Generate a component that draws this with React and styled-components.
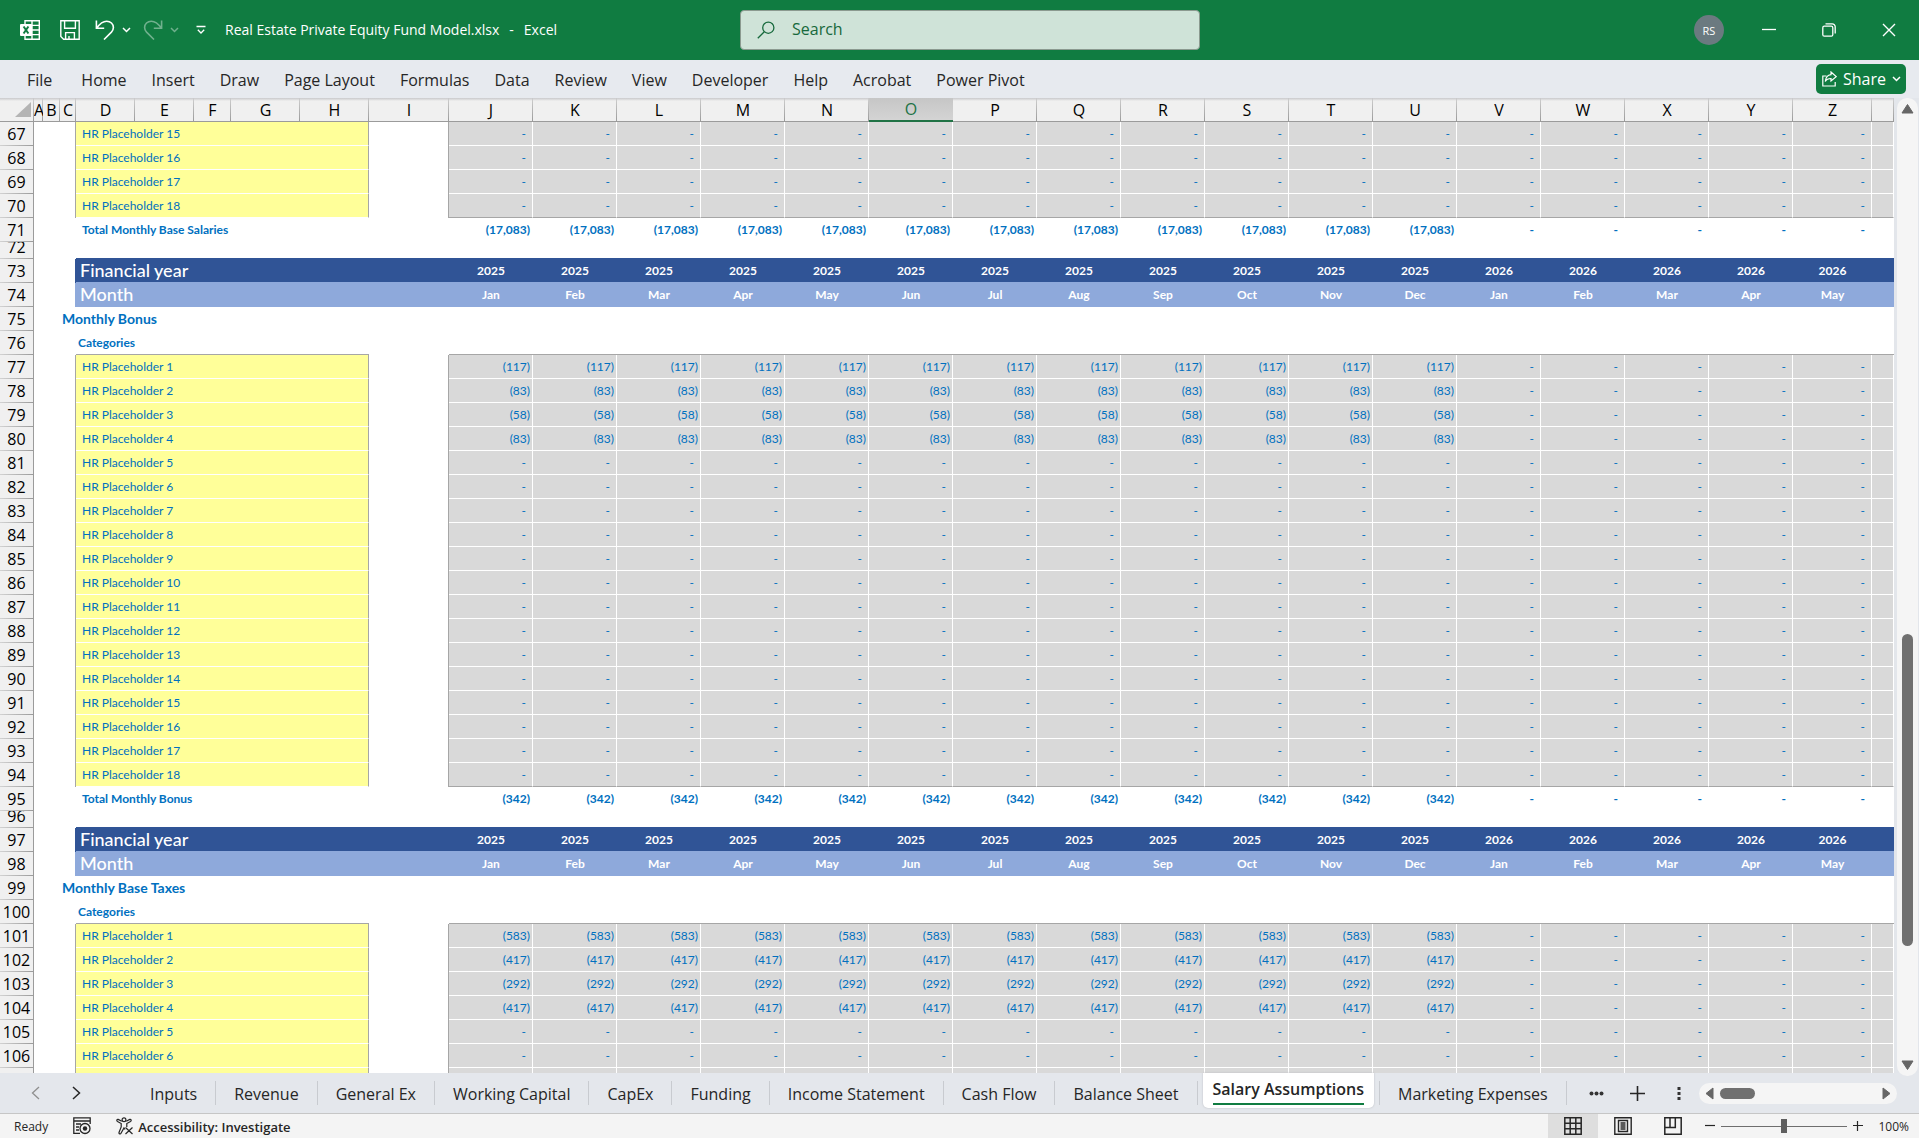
import React from "react";
import styled, { createGlobalStyle, css } from "styled-components";

const uiFont = '"Open Sans", "Noto Sans", sans-serif';
const cellFont = 'Lato, "Open Sans", sans-serif';
const color = {
  green: "#107c41",
  chrome: "#e7eaef",
  ink: "#262626",
  line: "#9b9b9b",
  cellLine: "#a6a6a6",
  link: "#0070c0",
  input: "#ffff99",
  calc: "#d9d9d9",
  year: "#305496",
  month: "#8ea9db",
};

const GlobalStyle = createGlobalStyle`
  *, *::before, *::after { box-sizing: border-box; }
  body { margin: 0; font-family: ${uiFont}; color: ${color.ink}; overflow: hidden; }
  button, input { font: inherit; color: inherit; }
  button { padding: 0; border: 0; background: none; cursor: pointer; white-space: nowrap; }
  svg { display: block; flex: none; }
`;

const Window = styled.div`
  display: flex;
  flex-direction: column;
  height: 100vh;
`;

/* ---------- title bar ---------- */

const TitleBar = styled.header`
  display: grid;
  grid-template-columns: 740px minmax(200px, 460px) 1fr;
  align-items: center;
  flex: none;
  height: 60px;
  background: ${color.green};
  color: #fff;
`;

const QuickAccess = styled.div`
  display: flex;
  align-items: center;
  padding-left: 20px;
`;

const QuickButton = styled.button`
  display: flex;
  margin-right: ${(p) => p.$gap || 0}px;
  opacity: ${(p) => (p.disabled ? 0.4 : 1)};
`;

const DocumentName = styled.div`
  display: flex;
  gap: 10px;
  font-size: 14px;
  line-height: 20px;
  white-space: nowrap;
`;

const SearchBox = styled.label`
  display: flex;
  align-items: center;
  gap: 17px;
  height: 40px;
  padding-left: 16px;
  border: 1px solid #8b9a90;
  border-radius: 4px;
  background: #cfe3d8;
  color: #17693c;
`;

const SearchInput = styled.input`
  flex: 1;
  min-width: 0;
  border: 0;
  outline: 0;
  background: transparent;
  font-size: 16px;
  line-height: 24px;
  padding: 0 0 2px;
  &::placeholder { color: #17693c; opacity: 1; }
`;

const WindowControls = styled.div`
  display: flex;
  justify-content: flex-end;
`;

const WindowButton = styled.button`
  display: grid;
  place-items: center;
  width: 60px;
  height: 60px;
`;

const Avatar = styled.span`
  display: grid;
  place-items: center;
  width: 30px;
  height: 30px;
  border-radius: 50%;
  background: #6b7a80;
  font-size: 11px;
`;

/* ---------- ribbon tabs ---------- */

const Ribbon = styled.nav`
  display: flex;
  align-items: center;
  flex: none;
  height: 38px;
  padding: 0 13px 0 15px;
  background: ${color.chrome};
`;

const RibbonTab = styled.button`
  padding: 2px 13px 0 12px;
  font-size: 16px;
  line-height: 24px;
  &:first-child { margin-right: 4px; }
`;

const ShareButton = styled.button`
  display: flex;
  align-items: center;
  gap: 6px;
  height: 30px;
  margin-left: auto;
  padding: 0 5px 0 6px;
  border-radius: 5px;
  background: ${color.green};
  color: #fff;
  font-size: 16px;
`;

/* ---------- grid ---------- */

const Workspace = styled.main`
  display: flex;
  flex: 1;
  min-height: 0;
`;

const SheetView = styled.div`
  flex: 1;
  min-width: 0;
  overflow: hidden;
  background: #fff;
`;

const Sheet = styled.table`
  width: 100%;
  table-layout: fixed;
  border-collapse: separate;
  border-spacing: 0;
  font: 12px/23px ${cellFont};
  color: ${color.link};
  th, td { padding: 0; }
`;

const Col = styled.col`
  width: ${(p) => (p.$width ? `${p.$width}px` : "auto")};
`;

const ColumnHead = styled.th`
  height: 24px;
  overflow: hidden;
  border-bottom: 1px solid ${color.line};
  background:
    linear-gradient(#c9c9cb, transparent) top / 100% 3px no-repeat,
    linear-gradient(#cfcfcf, ${color.line}) right / 1px 100% no-repeat,
    #f0f0f0;
  color: #000;
  font: 400 16px/22px ${uiFont};
  ${(p) =>
    p.$selected &&
    css`
      border-bottom: 2px solid #217346;
      background: linear-gradient(#c6c6c6, #d4d4d4);
      color: #217346;
    `}
`;

const SelectAll = styled.button`
  display: flex;
  justify-content: flex-end;
  width: 100%;
  padding-right: 3px;
`;

const RowHead = styled.th`
  border-right: 1px solid ${color.line};
  background:
    linear-gradient(90deg, #d2d2d2, ${color.line}) bottom / 100% 1px no-repeat,
    #f0f0f0;
  color: #000;
  font: 400 16px/23px ${uiFont};
`;

const RowNumber = styled.div`
  display: flex;
  align-items: flex-end;
  justify-content: center;
  height: ${(p) => (p.$short ? 17 : 24)}px;
  overflow: hidden;
`;

const Blank = styled.td`
  border-right: ${(p) => (p.$edge ? `1px solid ${p.$edge}` : 0)};
  border-bottom: ${(p) => (p.$base ? `1px solid ${p.$base}` : 0)};
`;

const InputCell = styled.td`
  border-right: 1px solid ${color.cellLine};
  border-bottom: 1px solid #fff;
  background: ${color.input};
`;

const CellText = styled.span`
  padding-left: 6px;
`;

const NumberCell = styled.td`
  border-right: 1px solid #fff;
  border-bottom: 1px solid ${(p) => (p.$last ? color.cellLine : "#fff")};
  background: ${(p) => (p.$plain ? "#fff" : color.calc)};
  font-weight: ${(p) => (p.$plain ? 700 : 400)};
  text-align: right;
`;

const Figure = styled.span`
  padding-right: ${(p) => (p.$dash ? 6 : 2)}px;
`;

const TotalLabel = styled.td`
  border-bottom: 1px solid #fff;
  font-weight: 700;
`;

const SectionTitle = styled.td`
  font-size: 14px;
  font-weight: 700;
  border-bottom: 1px solid #fff;
`;

const Indent = styled.span`
  padding-left: 2px;
`;

const GroupLabel = styled.td`
  border-bottom: 1px solid ${color.cellLine};
  font-weight: 700;
`;

const BandCell = styled.td`
  border-bottom: 1px solid ${color.month};
  background: ${(p) => (p.$month ? color.month : color.year)};
  color: #fff;
  font-weight: 700;
  text-align: center;
`;

const BandLabel = styled(BandCell)`
  font-size: 18px;
  font-weight: 500;
  text-align: left;
`;

const BandText = styled.span`
  padding-left: 4px;
`;

/* ---------- scroll bars ---------- */

const ScrollColumn = styled.div`
  display: flex;
  flex: none;
  width: 25px;
  padding: 0 1px 0 3px;
  background: #e3e6eb;
`;

const ScrollTrack = styled.div`
  display: flex;
  flex-direction: column;
  align-items: center;
  flex: 1;
  z-index: 1;
  margin-bottom: -3px;
  padding: 5px 0;
  border-radius: 10px;
  background: #f5f5f5;
`;

const ScrollSpace = styled.div`
  flex: ${(p) => p.$share} 0 0;
`;

const ScrollThumb = styled.div`
  flex: ${(p) => p.$share} 0 0;
  width: 11px;
  border-radius: 6px;
  background: #707070;
`;

const HorizontalTrack = styled.div`
  display: flex;
  align-items: center;
  width: 198px;
  height: 21px;
  padding: 0 6px;
  border-radius: 11px;
  background: #f5f5f5;
`;

const HorizontalThumb = styled.div`
  width: 35px;
  height: 11px;
  margin: 0 auto 0 6px;
  border-radius: 6px;
  background: #707070;
`;

/* ---------- sheet tabs ---------- */

const SheetTabs = styled.nav`
  display: flex;
  align-items: center;
  flex: none;
  height: 41px;
  padding-right: 22px;
  border-bottom: 1px solid #c6c6c6;
  background: #e4e7ec;
`;

const TabArrows = styled.div`
  display: flex;
  gap: 32px;
  width: 132px;
  padding-left: 31px;
  flex: none;
`;

const TabSlot = styled.div`
  display: flex;
  align-items: center;
  height: 24px;
  border-right: 1px solid #c8cbd0;
`;

const SheetTab = styled.button`
  padding: 1px 18px 0;
  font-size: 16px;
  line-height: 24px;
`;

const ActiveSlot = styled.div`
  align-self: flex-start;
  height: 35px;
  margin: 0 5px;
  padding: 0 10px;
  border-radius: 0 0 5px 5px;
  background: #fff;
  box-shadow: 0 0 2px #b5b8bd;
`;

const ActiveTab = styled.button`
  height: 32px;
  padding-top: 2px;
  border-bottom: 2px solid ${color.green};
  font-size: 16px;
  font-weight: 600;
  line-height: 26px;
`;

const TabTools = styled.div`
  display: flex;
  align-items: center;
  gap: 26px;
  padding-left: 22px;
`;

const ScrollTools = styled.div`
  display: flex;
  align-items: center;
  gap: 18px;
  margin-left: auto;
`;

/* ---------- status bar ---------- */

const StatusBar = styled.footer`
  display: flex;
  align-items: center;
  flex: none;
  height: 24px;
  background: #f4f4f4;
  font-size: 12px;
  line-height: 20px;
`;

const StatusText = styled.span`
  padding-top: 2px;
`;

const StatusInfo = styled.div`
  display: flex;
  align-items: center;
  gap: 25px;
  padding-left: 14px;
`;

const Accessibility = styled.button`
  display: flex;
  align-items: center;
  gap: 4px;
  font-size: 13px;
  font-weight: 600;
`;

const StatusTools = styled.div`
  display: flex;
  align-items: center;
  margin-left: auto;
  padding-right: 10px;
`;

const ViewButton = styled.button`
  display: grid;
  place-items: center;
  width: 50px;
  height: 24px;
  background: ${(p) => (p.$on ? "#dedede" : "transparent")};
`;

const Zoom = styled.div`
  display: flex;
  align-items: center;
  gap: 6px;
  padding: 0 15px 0 7px;
`;

const ZoomSlider = styled.input`
  width: 126px;
  height: 14px;
  margin: 0;
  appearance: none;
  background: linear-gradient(#6e6e6e, #6e6e6e) center / 100% 1px no-repeat;
  &::-webkit-slider-thumb {
    appearance: none;
    width: 6px;
    height: 14px;
    background: #5f5f5f;
  }
`;

/* ---------- icons ---------- */

const Icon = ({ w = 20, h = w, sw = 1.4, children }) => (
  <svg width={w} height={h} viewBox={`0 0 ${w} ${h}`} fill="none" stroke="currentColor" strokeWidth={sw} aria-hidden="true">
    {children}
  </svg>
);

const ExcelIcon = () => (
  <Icon>
    <path d="M5 4V.8h14.3v18.4H5V16M5 5.4h14M5 10h14M5 14.6h14M12 .8v18.4" />
    <rect x="0" y="4" width="12" height="12" rx="1" fill="#fff" stroke="none" />
    <path d="M3.6 6.5l4.8 7M8.4 6.5l-4.8 7" stroke={color.green} strokeWidth="2" />
  </Icon>
);
const SaveIcon = () => (
  <Icon>
    <path d="M.8.8h18.4v18.4H3.6L.8 16.4zM4.6.8v7.4h10.8V.8M5.6 19v-6.4h8.8V19M9 16v3" />
  </Icon>
);
const UndoIcon = () => (
  <Icon w={20} sw={1.6}>
    <path d="M1.4.5v7.8h7.8M1.8 8C4 4.8 7.4 1.2 11.7 1.2c3.8 0 6.700 2.800 6.700 6.300 0 1.900-.8 3.300-2 4.600L9 19.500" />
  </Icon>
);
const RedoIcon = () => (
  <Icon w={20} sw={1.6}>
    <path d="M18.600.5v7.800h-7.800M18.200 8C16 4.800 12.600 1.200 8.300 1.200 4.500 1.200 1.600 4 1.600 7.500c0 1.900.8 3.300 2 4.600L11 19.500" />
  </Icon>
);
const ChevronIcon = () => (
  <Icon w={9} h={6} sw={1.5}>
    <path d="M1 1l3.500 3.500L8 1" />
  </Icon>
);
const CustomizeIcon = () => (
  <Icon w={10} h={10} sw={1.3}>
    <path d="M.5 1.500h9M1.800 4.800L5 8l3.200-3.200" />
  </Icon>
);
const SearchIcon = () => (
  <Icon w={18} sw={1.3}>
    <circle cx="11.300" cy="6.700" r="5.600" />
    <path d="M7.300 10.700L.8 17.200" />
  </Icon>
);
const MinimizeIcon = () => (
  <Icon w={14} sw={1.3}>
    <path d="M0 6.500h14" />
  </Icon>
);
const RestoreIcon = () => (
  <Icon w={14} sw={1.3}>
    <rect x=".8" y="3.200" width="10" height="10" rx="1.500" />
    <path d="M3.500.8h6.700a3 3 0 0 1 3 3v6.700" />
  </Icon>
);
const CloseIcon = () => (
  <Icon w={14} sw={1.4}>
    <path d="M1 1l12 12M13 1L1 13" />
  </Icon>
);
const ShareIcon = () => (
  <Icon w={15} h={16} sw={1.2}>
    <path d="M4.500 5H.8v10h12.400v-4" />
    <path d="M9 1l5.200 4.600L9 10V7.500c-2.800 0-4.500.8-5.700 3C3.600 6.800 5.500 4 9 3.600z" />
  </Icon>
);
const Corner = () => (
  <svg width="16" height="15" viewBox="0 0 16 15" aria-hidden="true">
    <path d="M16 0v15H0z" fill="#b4b4b4" />
  </svg>
);
const Arrow = ({ d, w, h }) => (
  <svg width={w} height={h} viewBox={`0 0 ${w} ${h}`} aria-hidden="true">
    <path d={d} fill="#666" stroke="#666" strokeLinejoin="round" />
  </svg>
);
const PrevIcon = () => (
  <Icon w={9} h={14} sw={1.3}>
    <path d="M8 1L1.500 7 8 13" stroke="#8f8f8f" />
  </Icon>
);
const NextIcon = () => (
  <Icon w={9} h={14} sw={1.5}>
    <path d="M1 1l6.500 6L1 13" />
  </Icon>
);
const MoreIcon = () => (
  <svg width="15" height="5" viewBox="0 0 15 5" fill="#333" aria-hidden="true">
    <circle cx="2.500" cy="2.500" r="2" />
    <circle cx="7.500" cy="2.500" r="2" />
    <circle cx="12.500" cy="2.500" r="2" />
  </svg>
);
const KebabIcon = () => (
  <svg width="4" height="14" viewBox="0 0 4 14" fill="#333" aria-hidden="true">
    <path d="M.5 1h3v3h-3zM.5 6h3v3h-3zM.5 11h3v3h-3z" />
  </svg>
);
const AddIcon = () => (
  <Icon w={15} sw={1.6}>
    <path d="M7.500 0v15M0 7.500h15" />
  </Icon>
);
const MacroIcon = () => (
  <Icon w={18} sw={1.3}>
    <path d="M7 16.300H.8V.8h16.400V7M.8 4h16.400M3 7h5M3 10h3M3 13h3" />
    <circle cx="12" cy="11.500" r="5" />
    <circle cx="12" cy="11.500" r="2.200" fill="currentColor" stroke="none" />
  </Icon>
);
const PersonIcon = () => (
  <Icon w={18} sw={1.2}>
    <circle cx="8" cy="2.700" r="1.900" />
    <path d="M5.800 4.300L2.200 2.400C.9 2 .3 3.800 1.500 4.500l3.700 2v3.500L3 15.500c-.3 1.500 1.500 2 2 .8L8 11l1 1.500M10.200 4.300l3.600-1.900c1.300-.4 1.900 1.400.7 2.100l-3.700 2V10M9.500 10.500l7 6.500M16.500 10.500l-7 6.500" />
  </Icon>
);
const NormalViewIcon = () => (
  <Icon w={18} sw={1.5}>
    <path d="M.8.8h16.400v16.400H.8zM6.200.8v16.400M11.800.8v16.400M.8 6.200h16.400M.8 11.800h16.400" />
  </Icon>
);
const PageViewIcon = () => (
  <Icon w={18} sw={1.4}>
    <path d="M.8.8h16.400v16.400H.8zM4.500 3.500h9v11h-9zM6.500 6h5M6.500 8h5M6.500 10h5M6.500 12h5" />
  </Icon>
);
const BreakViewIcon = () => (
  <Icon w={18} sw={1.5}>
    <path d="M.8.8h16.400v16.400H.8zM.8 10.500h10.500V.8M6 .8v9.700" />
  </Icon>
);
const MinusIcon = () => (
  <Icon w={10} sw={1.2}>
    <path d="M0 4.500h10" />
  </Icon>
);
const PlusIcon = () => (
  <Icon w={10} sw={1.2}>
    <path d="M0 4.500h10M4.500 0v10" />
  </Icon>
);

/* ---------- data ---------- */

const columns = [
  ["A", 9], ["B", 17], ["C", 16], ["D", 59], ["E", 59], ["F", 37], ["G", 69], ["H", 69], ["I", 80],
  ..."JKLMNOPQRSTUVWXY".split("").map((c) => [c, 84]),
  ["Z", 79], ["", null],
];
const months = ["Jan", "Feb", "Mar", "Apr", "May", "Jun", "Jul", "Aug", "Sep", "Oct", "Nov", "Dec", "Jan", "Feb", "Mar", "Apr", "May"];
const years = months.map((_, i) => (i < 12 ? "2025" : "2026"));

const placeholders = (from, to, amounts = []) =>
  Array.from({ length: to - from + 1 }, (_, i) => ({
    type: "item",
    label: `HR Placeholder ${from + i}`,
    amount: amounts[i],
    last: from + i === 18,
  }));

const heading = (title) => [{ type: "gap" }, { type: "year" }, { type: "month" }, { type: "title", label: title }, { type: "group" }];

const rows = [
  ...placeholders(15, 18),
  { type: "total", label: "Total Monthly Base Salaries", amount: "(17,083)" },
  ...heading("Monthly Bonus"),
  ...placeholders(1, 18, ["(117)", "(83)", "(58)", "(83)"]),
  { type: "total", label: "Total Monthly Bonus", amount: "(342)" },
  ...heading("Monthly Base Taxes"),
  ...placeholders(1, 7, ["(583)", "(417)", "(292)", "(417)"]),
];

const ribbonTabs = ["File", "Home", "Insert", "Draw", "Page Layout", "Formulas", "Data", "Review", "View", "Developer", "Help", "Acrobat", "Power Pivot"];
const tabsBefore = ["Inputs", "Revenue", "General Ex", "Working Capital", "CapEx", "Funding", "Income Statement", "Cash Flow", "Balance Sheet"];

/* ---------- rows ---------- */

const figures = (row, plain) =>
  months.map((_, i) => {
    const value = row.amount && i < 12 ? row.amount : "-";
    return (
      <NumberCell key={i} $plain={plain} $last={row.last}>
        <Figure $dash={value === "-"}>{value}</Figure>
      </NumberCell>
    );
  });

function RowCells({ row }) {
  switch (row.type) {
    case "item":
      return (
        <>
          <Blank colSpan={2} />
          <Blank $edge={color.cellLine} />
          <InputCell colSpan={5}><CellText>{row.label}</CellText></InputCell>
          <Blank $edge={color.cellLine} />
          {figures(row, false)}
          <NumberCell $last={row.last} />
        </>
      );
    case "total":
      return (
        <>
          <Blank colSpan={3} />
          <TotalLabel colSpan={6}><CellText>{row.label}</CellText></TotalLabel>
          {figures(row, true)}
          <Blank />
        </>
      );
    case "year":
    case "month": {
      const isMonth = row.type === "month";
      return (
        <>
          <Blank colSpan={2} />
          <Blank $edge={isMonth ? color.month : color.year} />
          <BandLabel $month={isMonth} colSpan={6}><BandText>{isMonth ? "Month" : "Financial year"}</BandText></BandLabel>
          {(isMonth ? months : years).map((text, i) => (
            <BandCell key={i} $month={isMonth}>{text}</BandCell>
          ))}
          <BandCell $month={isMonth} />
        </>
      );
    }
    case "title":
      return (
        <>
          <Blank colSpan={2} />
          <SectionTitle colSpan={7}><Indent>{row.label}</Indent></SectionTitle>
          <Blank colSpan={18} />
        </>
      );
    case "group":
      return (
        <>
          <Blank colSpan={3} />
          <GroupLabel colSpan={5}><Indent>Categories</Indent></GroupLabel>
          <Blank />
          <Blank colSpan={18} $base={color.cellLine} />
        </>
      );
    default:
      return (
        <>
          <Blank colSpan={3} />
          <Blank colSpan={24} $base={color.year} />
        </>
      );
  }
}

export default function App() {
  return (
    <Window>
      <GlobalStyle />
      <TitleBar>
        <QuickAccess>
          <QuickButton $gap={20} aria-label="Excel"><ExcelIcon /></QuickButton>
          <QuickButton $gap={15} aria-label="Save"><SaveIcon /></QuickButton>
          <QuickButton $gap={7} aria-label="Undo"><UndoIcon /></QuickButton>
          <QuickButton $gap={12} aria-label="Undo history"><ChevronIcon /></QuickButton>
          <QuickButton $gap={7} disabled aria-label="Redo"><RedoIcon /></QuickButton>
          <QuickButton $gap={17} disabled aria-label="Redo history"><ChevronIcon /></QuickButton>
          <QuickButton $gap={19} aria-label="Customize toolbar"><CustomizeIcon /></QuickButton>
          <DocumentName>
            <span>Real Estate Private Equity Fund Model.xlsx</span>
            <span>-</span>
            <span>Excel</span>
          </DocumentName>
        </QuickAccess>
        <SearchBox>
          <SearchIcon />
          <SearchInput type="text" placeholder="Search" aria-label="Search" />
        </SearchBox>
        <WindowControls>
          <WindowButton aria-label="Account"><Avatar>RS</Avatar></WindowButton>
          <WindowButton aria-label="Minimize"><MinimizeIcon /></WindowButton>
          <WindowButton aria-label="Restore"><RestoreIcon /></WindowButton>
          <WindowButton aria-label="Close"><CloseIcon /></WindowButton>
        </WindowControls>
      </TitleBar>

      <Ribbon>
        {ribbonTabs.map((name) => <RibbonTab key={name}>{name}</RibbonTab>)}
        <ShareButton><ShareIcon />Share<ChevronIcon /></ShareButton>
      </Ribbon>

      <Workspace>
        <SheetView>
          <Sheet>
            <colgroup>
              <Col $width={34} />
              {columns.map(([name, width]) => <Col key={name} $width={width} />)}
            </colgroup>
            <thead>
              <tr>
                <ColumnHead><SelectAll aria-label="Select all"><Corner /></SelectAll></ColumnHead>
                {columns.map(([name]) => <ColumnHead key={name} scope="col" $selected={name === "O"}>{name}</ColumnHead>)}
              </tr>
            </thead>
            <tbody>
              {rows.map((row, i) => (
                <tr key={i}>
                  <RowHead scope="row"><RowNumber $short={row.type === "gap"}>{67 + i}</RowNumber></RowHead>
                  <RowCells row={row} />
                </tr>
              ))}
            </tbody>
          </Sheet>
        </SheetView>
        <ScrollColumn>
          <ScrollTrack>
            <Arrow w={13} h={11} d="M6.500 1.500L12 10H1z" />
            <ScrollSpace $share={520} />
            <ScrollThumb $share={312} />
            <ScrollSpace $share={114} />
            <Arrow w={13} h={11} d="M6.500 9.500L12 1H1z" />
          </ScrollTrack>
        </ScrollColumn>
      </Workspace>

      <SheetTabs>
        <TabArrows>
          <button aria-label="Previous sheets"><PrevIcon /></button>
          <button aria-label="Next sheets"><NextIcon /></button>
        </TabArrows>
        {tabsBefore.map((name) => <TabSlot key={name}><SheetTab>{name}</SheetTab></TabSlot>)}
        <ActiveSlot><ActiveTab>Salary Assumptions</ActiveTab></ActiveSlot>
        <TabSlot />
        <TabSlot><SheetTab>Marketing Expenses</SheetTab></TabSlot>
        <TabTools>
          <button aria-label="More sheets"><MoreIcon /></button>
          <button aria-label="New sheet"><AddIcon /></button>
        </TabTools>
        <ScrollTools>
          <button aria-label="Resize tabs"><KebabIcon /></button>
          <HorizontalTrack>
            <Arrow w={9} h={13} d="M8 1v11L1 6.500z" />
            <HorizontalThumb />
            <Arrow w={9} h={13} d="M1 1v11l7-5.500z" />
          </HorizontalTrack>
        </ScrollTools>
      </SheetTabs>

      <StatusBar>
        <StatusInfo>
          <StatusText>Ready</StatusText>
          <button aria-label="Record macro"><MacroIcon /></button>
          <Accessibility><PersonIcon /><StatusText>Accessibility: Investigate</StatusText></Accessibility>
        </StatusInfo>
        <StatusTools>
          <ViewButton $on aria-label="Normal view"><NormalViewIcon /></ViewButton>
          <ViewButton aria-label="Page layout view"><PageViewIcon /></ViewButton>
          <ViewButton aria-label="Page break view"><BreakViewIcon /></ViewButton>
          <Zoom>
            <button aria-label="Zoom out"><MinusIcon /></button>
            <ZoomSlider type="range" min="0" max="200" defaultValue="100" aria-label="Zoom" />
            <button aria-label="Zoom in"><PlusIcon /></button>
          </Zoom>
          <StatusText>100%</StatusText>
        </StatusTools>
      </StatusBar>
    </Window>
  );
}
